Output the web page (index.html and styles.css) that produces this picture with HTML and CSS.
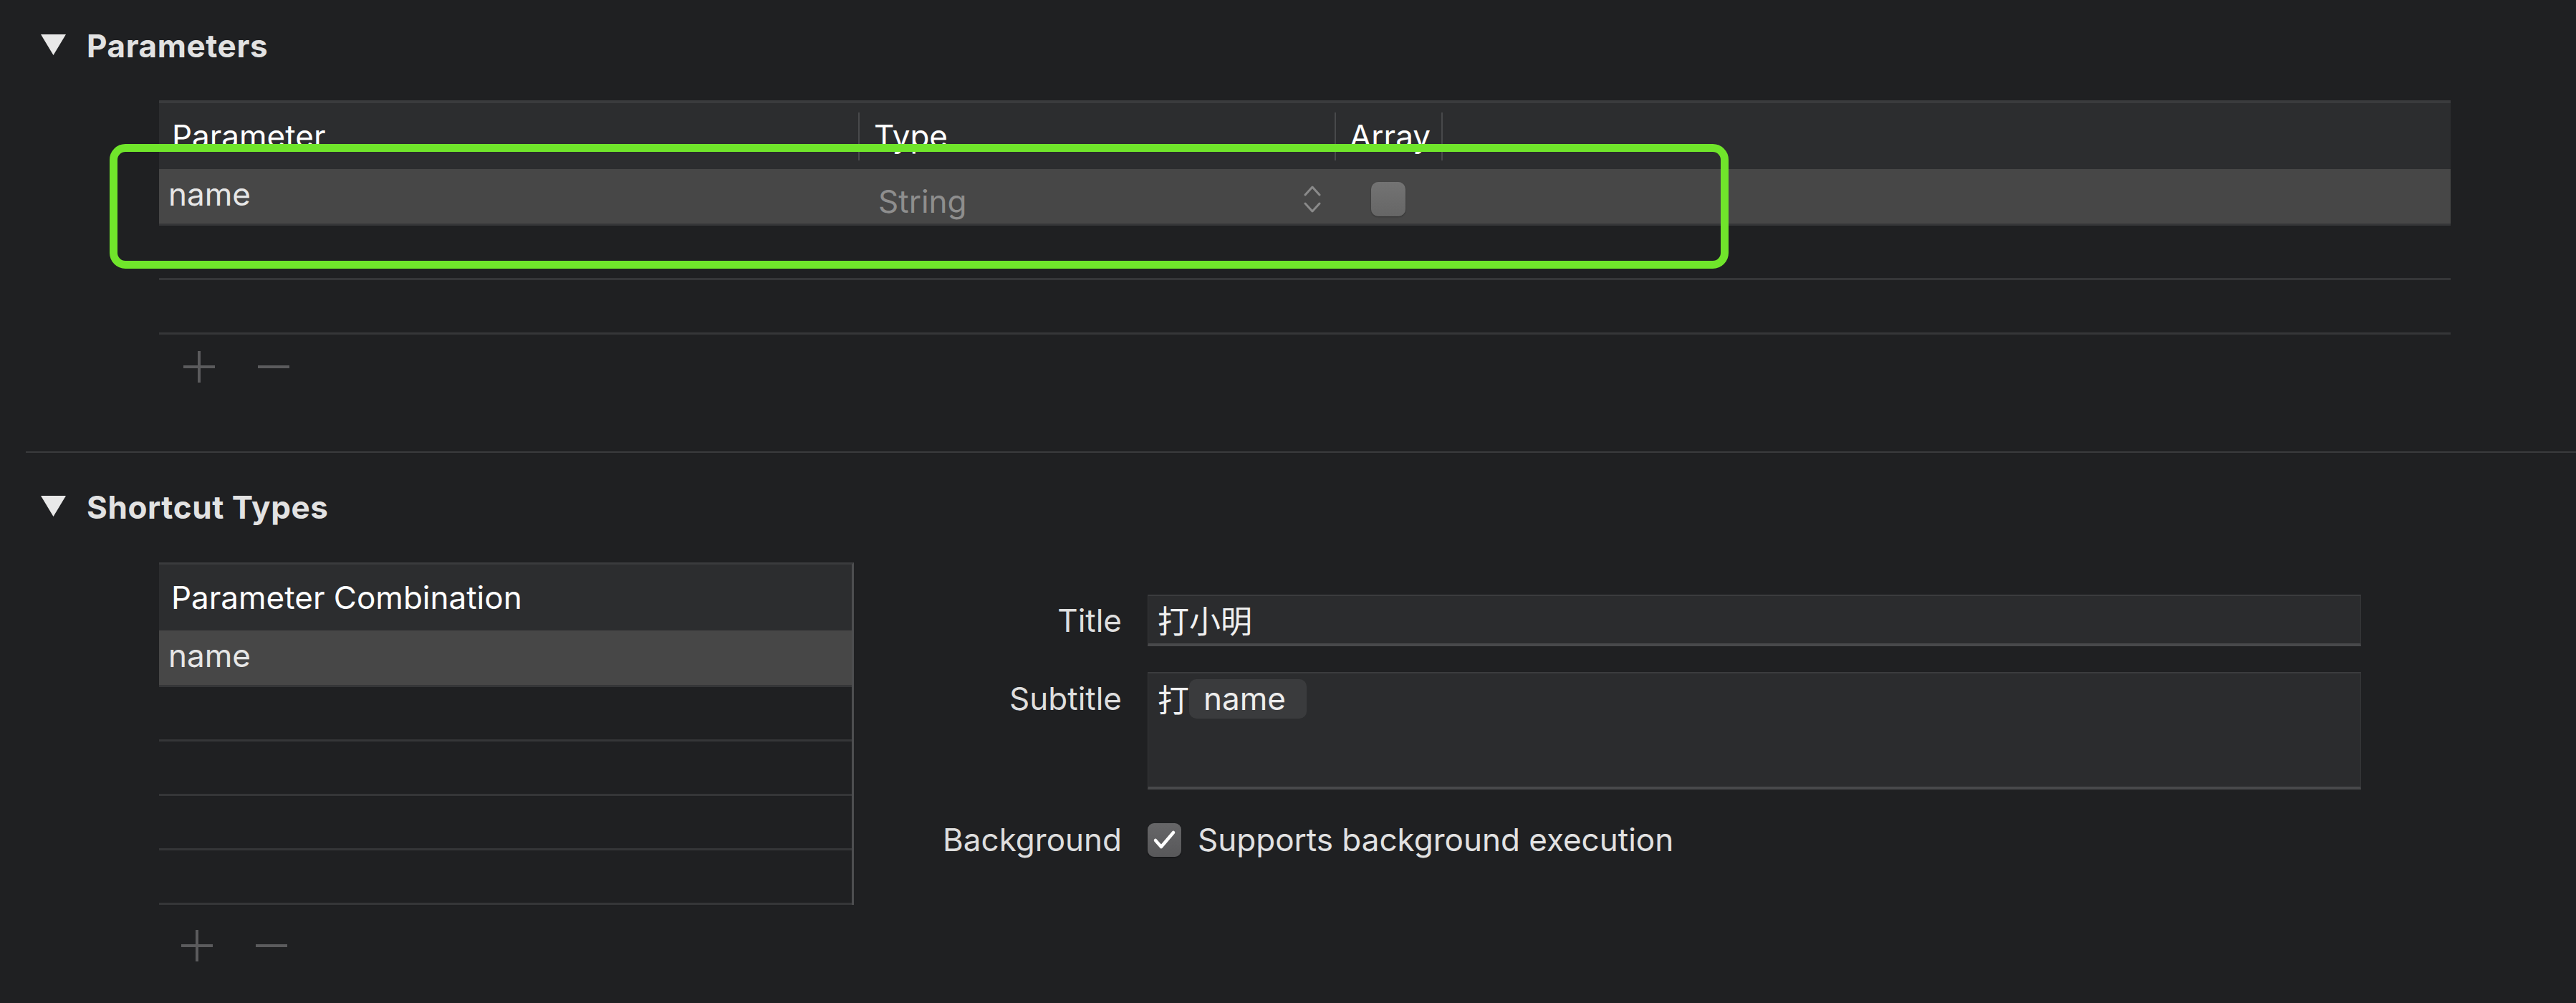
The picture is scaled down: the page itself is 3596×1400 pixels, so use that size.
FILE: index.html
```html
<!DOCTYPE html>
<html>
<head>
<meta charset="utf-8">
<link rel="stylesheet" href="styles.css">
</head>
<body>
<div class="page">
  <section class="sec">
    <div class="sec-head">
      <svg class="tri" viewBox="0 0 35 29"><polygon points="0,0 35,0 17.5,29"/></svg>
      <span>Parameters</span>
    </div>
    <div class="tbl tbl-params">
      <div class="thead">
        <div class="th c-param">Parameter</div>
        <div class="th c-type">Type</div>
        <div class="th c-array">Array</div>
      </div>
      <div class="tr sel">
        <div class="td c-param">name</div>
        <div class="td c-type">
          <span>String</span>
          <svg class="stepper" viewBox="0 0 24 40"><polyline points="2,14 12,3 22,14"/><polyline points="2,26 12,37 22,26"/></svg>
        </div>
        <div class="td c-array"><span class="cb"></span></div>
      </div>
      <div class="tr"></div>
      <div class="tr"></div>
    </div>
    <div class="pm pm-params">
      <svg class="pm-icon" viewBox="0 0 44 44"><line x1="0" y1="22" x2="44" y2="22"/><line x1="22" y1="0" x2="22" y2="44"/></svg>
      <svg class="pm-icon" viewBox="0 0 44 44"><line x1="0" y1="22" x2="44" y2="22"/></svg>
    </div>
  </section>

  <div class="divider"></div>

  <section class="sec">
    <div class="sec-head sec-head-2">
      <svg class="tri" viewBox="0 0 35 29"><polygon points="0,0 35,0 17.5,29"/></svg>
      <span>Shortcut Types</span>
    </div>
    <div class="types-body">
      <div class="combo">
        <div class="tbl tbl-combo">
          <div class="thead">
            <div class="th c-combo">Parameter Combination</div>
          </div>
          <div class="tr sel">
            <div class="td c-combo">name</div>
          </div>
          <div class="tr"></div>
          <div class="tr"></div>
          <div class="tr"></div>
          <div class="tr"></div>
        </div>
        <div class="pm pm-combo">
          <svg class="pm-icon" viewBox="0 0 44 44"><line x1="0" y1="22" x2="44" y2="22"/><line x1="22" y1="0" x2="22" y2="44"/></svg>
          <svg class="pm-icon" viewBox="0 0 44 44"><line x1="0" y1="22" x2="44" y2="22"/></svg>
        </div>
      </div>

      <div class="form">
        <div class="lbl lbl-title">Title</div>
        <div class="field field-title"><span class="cjk">打小明</span></div>

        <div class="lbl lbl-sub">Subtitle</div>
        <div class="field field-sub">
          <div class="sub-line"><span class="cjk">打</span><span class="token">name</span></div>
        </div>

        <div class="lbl lbl-bg">Background</div>
        <div class="bgcheck">
          <span class="cb-on"><svg viewBox="0 0 47 47"><polyline points="11,24 19,33 36,13"/></svg></span>
          <span>Supports background execution</span>
        </div>
      </div>
    </div>
  </section>

  <div class="highlight"></div>
</div>
</body>
</html>
```

FILE: styles.css
```css
html, body {
  margin: 0;
  padding: 0;
  background: #1f2022;
}

.page {
  position: relative;
  width: 3596px;
  height: 1400px;
  overflow: hidden;
  box-sizing: border-box;
  padding-top: 34px;
  font-family: Inter, "Noto Sans CJK SC", "DejaVu Sans", sans-serif;
  font-size: 44px;
  color: #e4e4e4;
}

/* section headers */
.sec-head {
  display: flex;
  align-items: center;
  height: 60px;
  line-height: 60px;
  margin-left: 57px;
  font-weight: 700;
  letter-spacing: 0.6px;
  color: #e2e2e2;
}
.sec-head-2 {
  margin-top: 46px;
}
.tri {
  width: 35px;
  height: 29px;
  margin-right: 29px;
  margin-bottom: 3px;
  fill: #e8e8e8;
}

/* tables */
.tbl {
  box-sizing: border-box;
}
.tbl-params {
  margin: 46px 0 0 222px;
  width: 3199px;
  border-top: 4px solid #3a3b3d;
}
.thead {
  display: flex;
  align-items: center;
  height: 92px;
  background: #2c2d2f;
}
.th {
  box-sizing: border-box;
  height: 67px;
  line-height: 67px;
  color: #ffffff;
  white-space: nowrap;
}
.th.c-param {
  width: 978px;
  padding-left: 18px;
  border-right: 2px solid #48494b;
}
.th.c-type {
  width: 665px;
  padding-left: 20px;
  border-right: 2px solid #48494b;
}
.th.c-array {
  width: 149px;
  padding-left: 19px;
  border-right: 2px solid #48494b;
}
.th.c-combo {
  padding-left: 17px;
}

.tr {
  display: flex;
  align-items: center;
  box-sizing: border-box;
  height: 76px;
  border-bottom: 3px solid #353638;
}
.tr.sel {
  height: 79px;
  background: #474747;
}
.td {
  box-sizing: border-box;
  white-space: nowrap;
}
.td.c-param {
  width: 978px;
  padding: 0 0 6px 13px;
  color: #e6e6e6;
}
.td.c-type {
  width: 665px;
  display: flex;
  align-items: center;
  justify-content: space-between;
  padding: 0 21px 0 26px;
  color: #8e8e8e;
}
.td.c-type span {
  padding-top: 13px;
}
.stepper {
  width: 24px;
  height: 40px;
  margin-top: 8px;
  fill: none;
  stroke: #8a8a8a;
  stroke-width: 3;
  stroke-linecap: round;
  stroke-linejoin: round;
}
.td.c-array {
  width: 149px;
  display: flex;
  padding: 8px 0 0 49px;
}
.cb {
  display: block;
  width: 48px;
  height: 48px;
  border-radius: 10px;
  background: linear-gradient(#737373, #666666);
  box-shadow: 0 1px 2px rgba(0, 0, 0, 0.35);
}
.td.c-combo {
  padding: 0 0 6px 13px;
  color: #e6e6e6;
}

/* plus / minus */
.pm {
  display: flex;
  gap: 60px;
}
.pm-params {
  margin: 23px 0 0 256px;
}
.pm-combo {
  margin: 35px 0 0 31px;
}
.pm-icon {
  width: 44px;
  height: 44px;
  stroke: #5b5b5d;
  stroke-width: 4;
}

.divider {
  margin: 96px 0 0 36px;
  height: 2px;
  background: #3a3b3d;
}

/* shortcut types */
.types-body {
  display: flex;
  align-items: flex-start;
  margin-top: 47px;
}
.combo {
  margin-left: 222px;
  width: 970px;
}
.tbl-combo {
  width: 970px;
  border-top: 3px solid #3a3b3d;
  border-right: 3px solid #4d4e50;
}

.form {
  display: grid;
  grid-template-columns: 300px 1694px;
  column-gap: 36px;
  row-gap: 36px;
  margin: 45px 0 0 74px;
}
.lbl {
  text-align: right;
  color: #dedede;
  white-space: nowrap;
}
.lbl-title {
  align-self: center;
}
.field {
  box-sizing: border-box;
  background: #2b2c2e;
  border-top: 2px solid #3b3c3e;
  border-bottom: 4px solid #48494b;
  border-left: 1px solid #353638;
  border-right: 1px solid #353638;
  padding-left: 13px;
  color: #f0f0f0;
}
.field-title {
  height: 72px;
  display: flex;
  align-items: center;
}
.cjk {
  font-family: "Noto Sans CJK SC", sans-serif;
}
.lbl-sub {
  align-self: start;
  padding-top: 10px;
  line-height: 55px;
}
.field-sub {
  height: 164px;
  padding-top: 8px;
}
.sub-line {
  display: flex;
  align-items: center;
  height: 55px;
  line-height: 55px;
}
.token {
  height: 55px;
  line-height: 55px;
  padding: 0 29px 0 20px;
  border-radius: 10px;
  background: #3a3b3d;
  color: #ededed;
}
.lbl-bg {
  align-self: center;
  margin-top: 11px;
  line-height: 47px;
}
.bgcheck {
  display: flex;
  align-items: center;
  gap: 23px;
  margin-top: 11px;
  height: 47px;
  line-height: 47px;
  color: #e2e2e2;
  white-space: nowrap;
}
.cb-on {
  display: flex;
  width: 47px;
  height: 47px;
  border-radius: 9px;
  background: linear-gradient(#666668, #58585a);
  box-shadow: 0 1px 2px rgba(0, 0, 0, 0.4);
}
.cb-on svg {
  width: 47px;
  height: 47px;
  fill: none;
  stroke: #ffffff;
  stroke-width: 4.5;
  stroke-linecap: round;
  stroke-linejoin: round;
}

/* annotation overlay */
.highlight {
  position: absolute;
  left: 153px;
  top: 201px;
  width: 2260px;
  height: 174px;
  box-sizing: border-box;
  border: 11px solid #70e52b;
  border-radius: 22px;
}
```
